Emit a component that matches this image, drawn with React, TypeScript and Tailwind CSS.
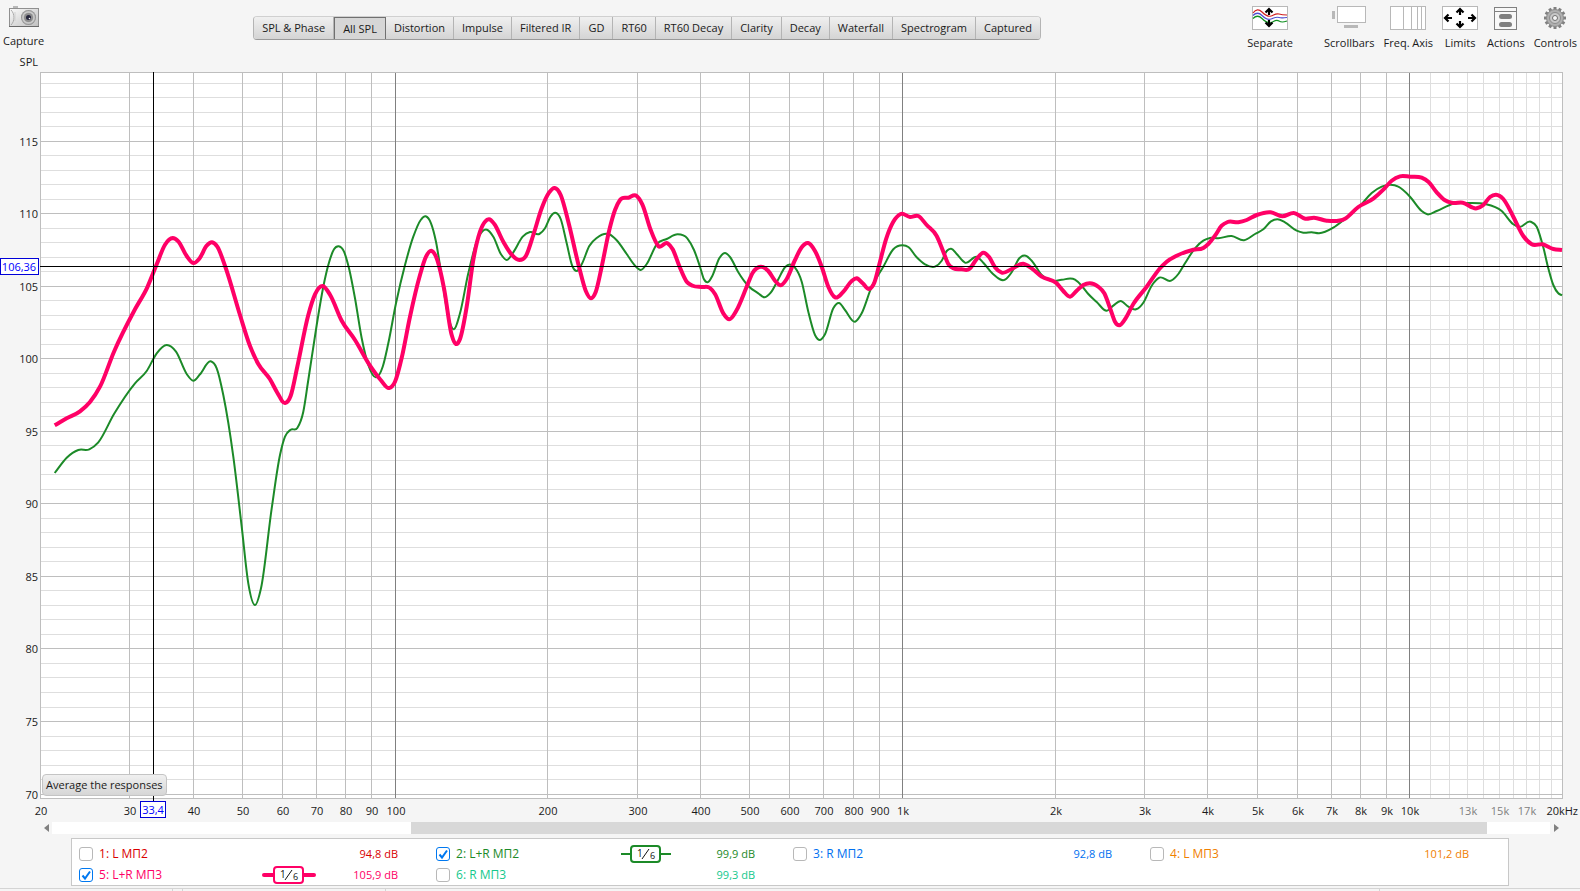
import { useLayoutEffect, useRef, useState, type ReactNode } from 'react'
import clsx from 'clsx'

type Point = [number, number]

type Trace = {
  id: number
  name: string
  level: string
  color: string
  text: string
  smoothing?: 'thin' | 'thick'
}

const tabs = [
  'SPL & Phase',
  'All SPL',
  'Distortion',
  'Impulse',
  'Filtered IR',
  'GD',
  'RT60',
  'RT60 Decay',
  'Clarity',
  'Decay',
  'Waterfall',
  'Spectrogram',
  'Captured',
]

const traces: Trace[] = [
  { id: 1, name: 'L МП2', level: '94,8 dB', color: '#d90000', text: 'text-[#d90000]' },
  { id: 2, name: 'L+R МП2', level: '99,9 dB', color: '#1c8a28', text: 'text-[#1c8a28]', smoothing: 'thin' },
  { id: 3, name: 'R МП2', level: '92,8 dB', color: '#0070f0', text: 'text-[#0070f0]' },
  { id: 4, name: 'L МП3', level: '101,2 dB', color: '#f08000', text: 'text-[#f08000]' },
  { id: 5, name: 'L+R МП3', level: '105,9 dB', color: '#ff0066', text: 'text-[#ff0066]', smoothing: 'thick' },
  { id: 6, name: 'R МП3', level: '99,3 dB', color: '#14c88c', text: 'text-[#14c88c]' },
]

// Sampled curves, in the units of DATA_BOX
const DATA_BOX = { x: 40, y: 72, width: 1522, height: 726 }

const curves: Record<number, Point[]> = {
  2: [
    [54.7, 473], [66.7, 457.7], [78.3, 450], [89.3, 449.3], [98.3, 442.3], [114, 414], [135, 383.3], [146.7, 371],
    [156.7, 353.3], [166.7, 345], [176, 351.7], [186.7, 374], [193.3, 380.7], [200, 374.3], [210.7, 361.3],
    [216.7, 368.3], [223.3, 395], [233.3, 456.7], [241.7, 526.7], [248.3, 583.3], [255, 605], [261, 588.3],
    [271.7, 508.3], [280, 455], [285, 436.7], [290.7, 429.7], [297.3, 428], [303.3, 411.7], [308.3, 380],
    [316.7, 325], [323.3, 286.7], [328.3, 265], [334, 249.3], [338.7, 246.3], [344, 251.7], [349, 268.3],
    [355, 298.3], [361.7, 338.3], [368.3, 365], [375.7, 377.3], [382.7, 366.7], [388.3, 343.3], [396, 303.3],
    [405, 265], [413.3, 236.7], [420.7, 220], [425.7, 216.3], [431, 223.3], [436, 241.7], [441.7, 276.7],
    [448.3, 316.7], [454, 329.3], [460, 313.3], [468.3, 273.3], [477.3, 240], [482.7, 231], [487, 229.7],
    [493.3, 236.7], [501, 254.3], [506.7, 260], [513.3, 252.3], [522.7, 236.7], [530, 232], [539.3, 234],
    [545, 228.3], [550.7, 216.3], [555.3, 212.7], [560.7, 219], [566.7, 243.3], [572.3, 266], [576.7, 271],
    [581.7, 264.3], [589.3, 246], [596.7, 238], [609.3, 234.3], [616.7, 240.3], [626.7, 254], [635, 265.7],
    [640.7, 270], [646.7, 264], [656.7, 244.3], [666.7, 239], [677.7, 234.3], [687.3, 238.3], [694, 250],
    [700, 266.7], [704, 279.3], [707.7, 282.3], [712.3, 276], [719.3, 258.3], [725, 253], [730, 257],
    [738.3, 272.3], [748.3, 286], [758.3, 293.3], [764.7, 297.3], [770.7, 292.7], [778.3, 279.3], [785, 267.3],
    [790, 264.5], [795, 267.7], [801.7, 281.7], [808.3, 311.7], [815, 335], [820, 340], [825, 334.3],
    [833.3, 308.3], [839, 303], [845, 310], [855, 321.7], [861.7, 313.3], [871.7, 286.7], [883.3, 266.7],
    [893.3, 249.3], [902.7, 245.3], [908.3, 247], [916.7, 257.3], [925, 264.3], [935, 266.7], [941.7, 260.7],
    [946.7, 251], [951.3, 248.7], [956.7, 254], [965, 262.7], [977.3, 257], [983.3, 262.7], [993.3, 274.3],
    [1005, 279.7], [1011.7, 272.3], [1019.3, 258.3], [1025.7, 255.7], [1031.7, 260.7], [1041.7, 275],
    [1051.7, 281], [1061.7, 279.7], [1075, 279.7], [1081.7, 285.7], [1088.3, 294], [1096.7, 302],
    [1106.7, 310.7], [1113.3, 305.7], [1120.7, 301], [1128.3, 306.7], [1136, 309.3], [1143.3, 302.7],
    [1151.7, 285.7], [1159.3, 277.7], [1171, 280.7], [1178.3, 274], [1185, 263.3], [1195, 248.3],
    [1203.3, 240.7], [1210, 238], [1218.3, 238.3], [1231.7, 236], [1244, 240.3], [1255, 234], [1263.3, 229.3],
    [1271, 221.3], [1277.3, 219.3], [1285, 222.3], [1296.7, 230.7], [1303.3, 232.7], [1311.7, 232.3],
    [1319, 233.3], [1333.3, 227.7], [1345, 219], [1360, 206], [1371.7, 193], [1381.7, 186.7], [1390.7, 184.7],
    [1398.3, 186.7], [1410, 196.7], [1421.7, 211], [1427.3, 214.3], [1436.7, 211], [1453.3, 203.7],
    [1468.3, 203], [1485, 204], [1501.7, 211], [1513.3, 224.3], [1519.3, 227], [1530.7, 221.7],
    [1536.7, 226.7], [1543.3, 247.3], [1548.3, 268.3], [1553.3, 285], [1558.3, 293.3], [1562, 295.3],
  ],
  5: [
    [54.7, 425.3], [66.7, 418.3], [80, 411.3], [90, 402], [100, 386.7], [114, 351.7], [135, 309.3],
    [147.3, 287.3], [156.7, 264.3], [165, 244.7], [172.7, 238], [178.3, 241.3], [186.7, 256], [193.3, 263],
    [199.3, 258.7], [206.7, 245.7], [212, 242.3], [217.3, 246.7], [225.3, 266.7], [240, 315], [250, 346],
    [258.3, 364], [270, 379.3], [277.3, 392.7], [285, 403], [290.7, 395.7], [297.3, 366.7], [308.3, 315],
    [315, 294.3], [322.7, 286], [330, 294.7], [341.7, 320.7], [355, 340], [370, 365.7], [380.7, 380],
    [389, 388], [395, 381.7], [401.7, 357.7], [410, 316.7], [420, 275], [426, 256.7], [431.3, 250.7],
    [437.3, 260], [444, 288.3], [451.7, 335], [456, 344], [460, 339], [466.7, 306.7], [473.3, 260],
    [480, 231.7], [485, 221.7], [489, 219.3], [494.3, 224], [503.3, 241.7], [511.7, 254.7], [519.3, 260],
    [526, 255.7], [533.3, 235], [541.7, 208.3], [549, 192.7], [554.7, 188], [560.7, 195], [568.3, 221.7],
    [579, 266.7], [585.7, 290.7], [591, 298.3], [595.7, 292], [601.7, 266.7], [609.3, 230], [615, 210],
    [620, 200], [628.3, 197.7], [636.7, 196], [642.3, 204.3], [650.7, 230], [658.3, 246], [667.7, 243.3],
    [672.7, 249.3], [679.3, 266], [686.7, 281.7], [692.7, 285.7], [701.7, 287], [710, 288], [715, 294],
    [723.3, 313.3], [729.3, 319.3], [736.7, 310], [746.7, 286.7], [752.7, 272.7], [760.7, 266.7],
    [768.3, 271], [775, 280.7], [780.7, 285.3], [786.7, 279], [795, 260], [801.7, 247.3], [808, 243],
    [815, 251], [821.7, 266.7], [828.3, 286.7], [835, 297.3], [843.3, 291.7], [851.7, 281], [856.7, 278.3],
    [862.7, 283.3], [869.3, 289], [874.3, 282.7], [880, 261.7], [886, 239.3], [893.3, 221.7], [900.7, 214],
    [910, 217], [918.3, 216], [926.7, 225], [936.7, 236], [943.3, 251.7], [948.3, 264], [953.3, 268.3],
    [961.7, 269.3], [969.3, 269], [976, 260], [983.3, 252.7], [989.3, 257.3], [995, 267.3], [1001.7, 272.7],
    [1011.7, 269], [1023.3, 263.7], [1031.7, 268.3], [1041.7, 276.7], [1056.7, 283.3], [1063.3, 291],
    [1070, 296.7], [1076.7, 290.7], [1083.3, 285], [1098.3, 286.7], [1104.3, 293.3], [1110.7, 310],
    [1115, 321.7], [1119.3, 325.3], [1125, 319.3], [1133.3, 304], [1146.7, 286.7], [1160, 268.3],
    [1166.7, 261.7], [1176.7, 255.7], [1193.3, 249.7], [1203.3, 248], [1208.3, 244], [1215, 235.7],
    [1221.7, 225.7], [1227.7, 222], [1238.3, 222.3], [1246.7, 220], [1256.7, 215], [1270.7, 212.3],
    [1282.3, 216.3], [1294, 213], [1305.3, 218.7], [1314, 217.7], [1326.7, 220.7], [1345, 218.7],
    [1358.3, 207], [1373.3, 198.7], [1383.3, 189.7], [1391.7, 180.7], [1400, 176.3], [1410, 176.7],
    [1421.7, 177.7], [1428.3, 181.7], [1436.7, 192.3], [1445, 200.3], [1451.7, 202.7], [1462.7, 202.7],
    [1476.7, 208.3], [1483.3, 205], [1490, 197], [1496, 194.7], [1503.3, 199], [1513.3, 216.7],
    [1523.3, 236], [1531.7, 244.3], [1542.7, 244.3], [1553.3, 249], [1562, 250],
  ],
}

// Cubic segments through the points, tangents weighted by the neighbouring gaps
function smoothPath(pts: Point[]) {
  const n = pts.length
  const slope: number[] = []
  for (let i = 0; i < n - 1; i++) {
    slope.push((pts[i + 1][1] - pts[i][1]) / (pts[i + 1][0] - pts[i][0]))
  }
  const tangent = pts.map((_, i) => {
    if (i === 0) return slope[0]
    if (i === n - 1) return slope[n - 2]
    const h0 = pts[i][0] - pts[i - 1][0]
    const h1 = pts[i + 1][0] - pts[i][0]
    return (slope[i - 1] * h1 + slope[i] * h0) / (h0 + h1)
  })
  let d = `M${pts[0][0].toFixed(1)},${pts[0][1].toFixed(1)}`
  for (let i = 0; i < n - 1; i++) {
    const [x0, y0] = pts[i]
    const [x1, y1] = pts[i + 1]
    const h = (x1 - x0) / 3
    d += `C${(x0 + h).toFixed(1)},${(y0 + tangent[i] * h).toFixed(1)} ${(x1 - h).toFixed(1)},${(y1 - tangent[i + 1] * h).toFixed(1)} ${x1.toFixed(1)},${y1.toFixed(1)}`
  }
  return d
}

const majorFreqs = [30, 40, 50, 60, 70, 80, 90, 200, 300, 400, 500, 600, 700, 800, 900, 2000, 3000, 4000, 5000, 6000, 7000, 8000, 9000]
const minorFreqs = [11000, 12000, 13000, 14000, 15000, 16000, 17000, 18000, 19000]
const decades = [100, 1000, 10000]
const labelFreqs = [20, ...majorFreqs, ...decades]
const grayFreqs = [13000, 15000, 17000]
const levels = Array.from({ length: 50 }, (_, i) => 70 + i)

const formatFreq = (f: number) => (f >= 1000 ? `${f / 1000}k` : `${f}`)

function Chart({ visible }: { visible: number[] }) {
  const ref = useRef<HTMLDivElement>(null)
  const [size, setSize] = useState({ width: 1580, height: 770 })

  useLayoutEffect(() => {
    const el = ref.current
    if (!el) return
    const measure = () => setSize({ width: el.clientWidth, height: el.clientHeight })
    measure()
    const observer = new ResizeObserver(measure)
    observer.observe(el)
    return () => observer.disconnect()
  }, [])

  const left = 40
  const top = 20
  const right = size.width - 18
  const bottom = size.height - 24
  const w = right - left
  const h = bottom - top

  const fx = (f: number) => Math.round(left + (w * Math.log10(f / 20)) / 3)
  const ly = (v: number) => Math.floor(top + ((119.76 - v) / 50.03) * h)
  const scale = ([x, y]: Point): Point => [
    left + ((x - DATA_BOX.x) / DATA_BOX.width) * w,
    top + ((y - DATA_BOX.y) / DATA_BOX.height) * h,
  ]

  const cursorX = fx(33.4)
  const cursorY = ly(106.36)

  return (
    <div ref={ref} className="relative min-h-0 flex-1">
      <svg className="absolute inset-0 text-[11px]" width={size.width} height={size.height}>
        <rect x={left} y={top} width={w} height={h} fill="#fff" />
        <g shapeRendering="crispEdges">
          {minorFreqs.map((f) => (
            <rect key={f} x={fx(f)} y={top} width={1} height={h} fill="#dedede" />
          ))}
          {levels.filter((v) => v % 5 !== 0).map((v) => (
            <rect key={v} x={left} y={ly(v)} width={w} height={1} fill="#dedede" />
          ))}
          {levels.filter((v) => v % 5 === 0).map((v) => (
            <rect key={v} x={left} y={ly(v)} width={w} height={1} fill="#bebebe" />
          ))}
          {majorFreqs.map((f) => (
            <rect key={f} x={fx(f)} y={top} width={1} height={h} fill="#bebebe" />
          ))}
          {decades.map((f) => (
            <rect key={f} x={fx(f)} y={top} width={1} height={h} fill="#808080" />
          ))}
          <rect x={left + 0.5} y={top + 0.5} width={w} height={h} fill="none" stroke="#bebebe" />
        </g>

        {/* Measurements */}
        {visible.includes(2) && (
          <path d={smoothPath(curves[2].map(scale))} fill="none" stroke="#1c8a28" strokeWidth={2} />
        )}
        {visible.includes(5) && (
          <path d={smoothPath(curves[5].map(scale))} fill="none" stroke="#ff0066" strokeWidth={4} strokeLinejoin="round" />
        )}

        {/* Cursor */}
        <g shapeRendering="crispEdges">
          <rect x={cursorX} y={top} width={1} height={h + 4} fill="#000" />
          <rect x={left} y={cursorY} width={w} height={1} fill="#000" />
          <rect x={0.5} y={cursorY - 7.5} width={38} height={16} fill="#fff" stroke="#0000d8" />
          <rect x={cursorX - 12.5} y={bottom + 3.5} width={25} height={16} fill="#fff" stroke="#0000d8" />
        </g>
        <text x={19} y={cursorY + 5} textAnchor="middle" fill="#0000ff">106,36</text>
        <text x={cursorX} y={bottom + 16} textAnchor="middle" fill="#0000ff">33,4</text>

        {/* Axis labels */}
        <g fill="#1a1a1a">
          <text x={38} y={14} textAnchor="end">SPL</text>
          {levels.filter((v) => v % 5 === 0).map((v) => (
            <text key={v} x={38} y={ly(v) + 5} textAnchor="end">{v}</text>
          ))}
          {labelFreqs.map((f) => (
            <text key={f} x={fx(f) + 1} y={bottom + 17} textAnchor="middle">{formatFreq(f)}</text>
          ))}
          <text x={size.width - 2} y={bottom + 17} textAnchor="end">20kHz</text>
        </g>
        <g fill="#808080">
          {grayFreqs.map((f) => (
            <text key={f} x={fx(f) + 1} y={bottom + 17} textAnchor="middle">{formatFreq(f)}</text>
          ))}
        </g>
      </svg>

      <button className="absolute bottom-[26px] left-[42px] h-[22px] rounded border border-[#c4c4c4] bg-linear-to-b from-[#f0f0f0] to-[#d6d6d6] px-[3px] pt-px text-[11px] whitespace-nowrap">
        Average the responses
      </button>
    </div>
  )
}

function ToolButton({ label, className, children }: { label: string; className?: string; children: ReactNode }) {
  return (
    <button className={clsx('flex flex-col items-center gap-[5px]', className)}>
      {children}
      <span className="leading-4 whitespace-nowrap">{label}</span>
    </button>
  )
}

function CameraIcon() {
  return (
    <svg width="30" height="22" viewBox="0 0 30 22">
      <defs>
        <linearGradient id="body" x1="0" y1="0" x2="1" y2="1">
          <stop offset="0" stopColor="#fafafa" />
          <stop offset="1" stopColor="#c0c0c0" />
        </linearGradient>
        <radialGradient id="lens">
          <stop offset="0" stopColor="#555" />
          <stop offset="0.5" stopColor="#a8a8a8" />
          <stop offset="0.75" stopColor="#d0d0d0" />
          <stop offset="1" stopColor="#808080" />
        </radialGradient>
      </defs>
      <path d="M4 2V0h5v2" fill="#b8b8b8" />
      <rect x="0.5" y="2.5" width="29" height="18" fill="url(#body)" stroke="#909090" />
      <path d="M0 20.5h30" stroke="#6a6a6a" />
      <path d="M2 4c4 4 4 11 0 15" fill="none" stroke="#aaa" />
      <path d="M6 6v9" stroke="#d0d0d0" />
      <circle cx="19.5" cy="11.5" r="7.5" fill="url(#lens)" />
      <circle cx="19.5" cy="11.5" r="4.5" fill="#8c8c8c" />
      <circle cx="19.5" cy="11.5" r="2.5" fill="#26263c" />
      <circle cx="20.5" cy="12.5" r="0.8" fill="#fff" />
    </svg>
  )
}

function SeparateIcon() {
  return (
    <svg width="36" height="24" viewBox="0 0 36 24">
      <rect x="0.5" y="0.5" width="35" height="23" fill="#fff" stroke="#b8b8b8" />
      <g fill="none" strokeWidth="1.2">
        <path d="M1 7C4 3 7 3 10 6s6 5 9 4 5-3 8-2 5 1 8 1" stroke="#d02020" />
        <path d="M1 9.500c3-3 6-3 9 0s6 4.500 9 3.500 5-2.500 8-1.500 5 0 8 0" stroke="#5050d0" />
        <path d="M1 12.500c3-3 6-3 9 0s6 5 9 4 5-3.500 8-1.500 5 1 8 0" stroke="#109020" />
      </g>
      <path d="M17 9V3M13.500 6.500L17 3l3.500 3.500M17 14v6M13.500 16.500L17 20l3.500-3.500" fill="none" stroke="#000" strokeWidth="2.200" />
    </svg>
  )
}

function ScrollbarsIcon() {
  return (
    <svg width="34" height="24" viewBox="0 0 34 24">
      <rect x="5.500" y="0.500" width="28" height="16" fill="#fff" stroke="#b8b8b8" />
      <rect x="0" y="5" width="3" height="8" fill="#b8b8b8" />
      <rect x="12" y="19" width="14" height="3" fill="#b8b8b8" />
    </svg>
  )
}

function FreqAxisIcon() {
  return (
    <svg width="36" height="24" viewBox="0 0 36 24">
      <rect x="0.5" y="0.5" width="35" height="23" fill="#fff" stroke="#b8b8b8" />
      <path d="M13.500 1v22M21.500 1v22M27.500 1v22M31.500 1v22" stroke="#b8b8b8" />
    </svg>
  )
}

function LimitsIcon() {
  return (
    <svg width="36" height="24" viewBox="0 0 36 24">
      <rect x="0.5" y="0.5" width="35" height="23" fill="#fff" stroke="#b8b8b8" />
      <path
        d="M18 9V3M14.500 6.500L18 3l3.500 3.500M18 15v6M14.500 17.500L18 21l3.500-3.500M10 12H3M6.500 8.500L3 12l3.500 3.500M26 12h7M29.500 8.500L33 12l-3.500 3.500"
        fill="none"
        stroke="#000"
        strokeWidth="2.200"
      />
    </svg>
  )
}

function ActionsIcon() {
  return (
    <svg width="24" height="24" viewBox="0 0 24 24">
      <rect x="0.500" y="1.500" width="22" height="22" fill="#f8f8f8" stroke="#808080" />
      <path d="M1 5.500h22" stroke="#808080" />
      <rect x="5" y="8" width="13" height="5" rx="2.500" fill="#808080" />
      <rect x="5" y="16" width="13" height="5" rx="2.500" fill="#808080" />
    </svg>
  )
}

function GearIcon() {
  return (
    <svg width="24" height="24" viewBox="0 0 24 24">
      <g stroke="#808080" strokeWidth="3">
        {[0, 30, 60, 90, 120, 150].map((a) => (
          <path key={a} d="M12 1v22" transform={`rotate(${a} 12 12)`} />
        ))}
      </g>
      <circle cx="12" cy="12" r="8.500" fill="#b0b0b0" stroke="#8c8c8c" />
      <circle cx="12" cy="12" r="5.500" fill="#c8c8c8" stroke="#8c8c8c" />
      <circle cx="12" cy="12" r="2.500" fill="#f5f5f5" stroke="#707070" />
    </svg>
  )
}

function SmoothingBadge({ color, thick }: { color: string; thick: boolean }) {
  return (
    <svg width="54" height="20" viewBox="0 0 54 20">
      <path d="M2 10h50" stroke={color} strokeWidth={thick ? 4 : 2} strokeLinecap={thick ? 'round' : 'butt'} />
      <rect x="12" y="2" width="29" height="16" rx="3" fill="#fff" stroke={color} strokeWidth="2" />
      <text x="18" y="13" fontSize="10" fill="#111">1</text>
      <path d="M23 15l7-10" stroke="#111" />
      <text x="31" y="15" fontSize="9" fill="#111">6</text>
    </svg>
  )
}

export default function App() {
  const [activeTab, setActiveTab] = useState('All SPL')
  const [visible, setVisible] = useState([2, 5])

  const toggle = (id: number) => {
    setVisible((prev) => (prev.includes(id) ? prev.filter((v) => v !== id) : [...prev, id]))
  }

  return (
    <div className="flex h-screen min-h-[480px] flex-col overflow-hidden bg-[#f5f5f5] font-['Open_Sans','Noto_Sans',sans-serif] text-[11px] text-[#1a1a1a]">
      <header className="flex h-[52px] shrink-0 items-start pr-[3px] pl-[3px]">
        <ToolButton label="Capture" className="pt-[6px]">
          <CameraIcon />
        </ToolButton>

        <nav className="mt-4 ml-[209px] flex h-6 overflow-hidden rounded border border-t-[#d0d0d0] border-r-[#b4b4b4] border-b-[#999] border-l-[#b4b4b4]">
          {tabs.map((tab) => (
            <button
              key={tab}
              onClick={() => setActiveTab(tab)}
              className={clsx(
                'px-2 pt-px whitespace-nowrap',
                tab === activeTab
                  ? 'border-x border-t border-[#707070] bg-[#d6d6d6]'
                  : 'border-r border-[#b4b4b4] bg-linear-to-b from-[#f0f0f0] to-[#d4d4d4] last:border-r-0'
              )}
            >
              {tab}
            </button>
          ))}
        </nav>

        <div className="ml-auto flex gap-[9px] pt-[6px]">
          <ToolButton label="Separate" className="mr-[22px]">
            <SeparateIcon />
          </ToolButton>
          <ToolButton label="Scrollbars">
            <ScrollbarsIcon />
          </ToolButton>
          <ToolButton label="Freq. Axis">
            <FreqAxisIcon />
          </ToolButton>
          <ToolButton label="Limits">
            <LimitsIcon />
          </ToolButton>
          <ToolButton label="Actions">
            <ActionsIcon />
          </ToolButton>
          <ToolButton label="Controls">
            <GearIcon />
          </ToolButton>
        </div>
      </header>

      <Chart visible={visible} />

      {/* Horizontal scrollbar */}
      <div className="flex h-3 shrink-0 pr-[18px] pl-10">
        <button aria-label="Scroll left" className="flex w-3 items-center justify-center">
          <svg width="5" height="8" viewBox="0 0 5 8"><path d="M5 0v8L0 4z" fill="#808080" /></svg>
        </button>
        <div className="flex-1 bg-white">
          <div className="h-full bg-[#d8d8d8]" style={{ marginLeft: `${(359 / 1498) * 100}%`, width: `${(1076 / 1498) * 100}%` }} />
        </div>
        <button aria-label="Scroll right" className="flex w-3 items-center justify-center">
          <svg width="5" height="8" viewBox="0 0 5 8"><path d="M0 0v8l5-4z" fill="#808080" /></svg>
        </button>
      </div>

      {/* Legend */}
      <div className="mx-[71px] mt-1 mb-[2px] grid h-12 shrink-0 grid-cols-4 content-end gap-y-px border border-[#c8c8c8] bg-white pr-px pl-[7px]">
        {traces.map((trace) => (
          <div key={trace.id} className={clsx('flex h-5 items-center pr-[38px]', trace.text)}>
            <label className="flex flex-1 items-center gap-[6px] text-xs">
              <span className="relative size-[14px]">
                <input
                  type="checkbox"
                  checked={visible.includes(trace.id)}
                  onChange={() => toggle(trace.id)}
                  className="peer block size-[14px] appearance-none rounded-[3px] border border-[#b8b8b8] bg-white checked:border-[#0078f0]"
                />
                <svg viewBox="0 0 14 14" className="pointer-events-none absolute inset-0 hidden peer-checked:block">
                  <path d="M3.500 7.500l2.500 3 5-7" fill="none" stroke="#0078f0" strokeWidth="2" />
                </svg>
              </span>
              {trace.id}: {trace.name}
            </label>
            {trace.smoothing && <SmoothingBadge color={trace.color} thick={trace.smoothing === 'thick'} />}
            <span className="w-[82px] text-right">{trace.level}</span>
          </div>
        ))}
      </div>

      {/* Status bar */}
      <footer className="flex h-[3px] shrink-0 border-t border-[#d4d4d4]">
        <div className="w-[173px] border-r border-[#d4d4d4]" />
        <div className="w-[10px] border-r border-[#d4d4d4]" />
        <div className="w-[203px] border-r border-[#d4d4d4]" />
        <div className="flex-1 border-r border-[#d4d4d4]" />
        <div className="w-[200px]" />
      </footer>
    </div>
  )
}
